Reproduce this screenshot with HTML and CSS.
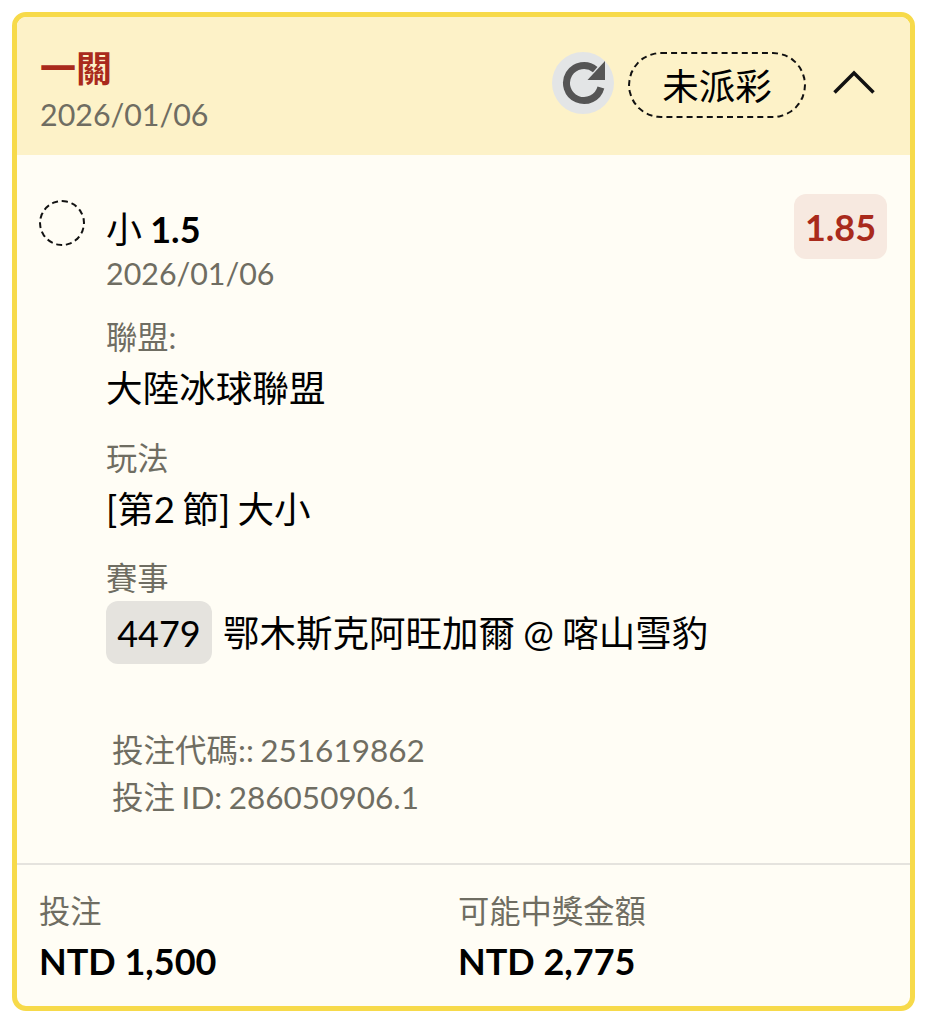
FILE: index.html
```html
<!DOCTYPE html>
<html lang="zh-Hant">
<head>
    <meta charset="UTF-8">
    <meta name="viewport" content="width=device-width, initial-scale=1.0">
    <title>一關</title>
    <link rel="stylesheet" href="styles.css">
</head>
<body>
    <div class="card">
        <div class="card-header">
            <div class="header-info">
                <div class="bet-type">一關</div>
                <div class="date">2026/01/06</div>
            </div>
            <div class="header-actions">
                <div class="refresh">
                    <svg width="46" height="46" viewBox="0 0 46 46">
                        <path class="refresh-arc" d="M40.900 27.500A17.500 17.500 0 1 1 35.200 9.600"/>
                        <path class="refresh-head" d="M45 1V20H27.500Z"/>
                    </svg>
                </div>
                <div class="status">未派彩</div>
                <svg class="chevron" width="42" height="24" viewBox="0 0 42 24">
                    <path d="M1.500 22.500L21 3 40.500 22.500"/>
                </svg>
            </div>
        </div>

        <div class="card-body">
            <div class="leg">
                <div class="leg-dot"></div>
                <div class="leg-main">
                    <div class="leg-top">
                        <div>
                            <div class="pick">小 <strong>1.5</strong></div>
                            <div class="date">2026/01/06</div>
                        </div>
                        <div class="odds">1.85</div>
                    </div>
                    <div class="field">
                        <div class="field-label">聯盟:</div>
                        <div class="field-value">大陸冰球聯盟</div>
                    </div>
                    <div class="field">
                        <div class="field-label">玩法</div>
                        <div class="field-value">[第2 節] 大小</div>
                    </div>
                    <div class="field">
                        <div class="field-label">賽事</div>
                        <div class="match">
                            <span class="match-id">4479</span>
                            <span class="field-value match-name">鄂木斯克阿旺加爾 @ 喀山雪豹</span>
                        </div>
                    </div>
                </div>
            </div>
            <div class="codes">
                <div>投注代碼:: 251619862</div>
                <div>投注 ID: 286050906.1</div>
            </div>
        </div>

        <div class="card-footer">
            <div class="amount">
                <div class="field-label">投注</div>
                <div class="amount-value">NTD 1,500</div>
            </div>
            <div class="amount">
                <div class="field-label">可能中獎金額</div>
                <div class="amount-value">NTD 2,775</div>
            </div>
        </div>
    </div>
</body>
</html>
```
FILE: styles.css
```css
body {
    margin: 0;
    padding: 12px 10px 16px 12px;
    font-family: Lato, "Noto Sans CJK TC", sans-serif;
    background: #fff;
    color: #000;
}

.card {
    height: 999px;
    box-sizing: border-box;
    border: 5px solid #f7da4a;
    border-radius: 14px;
    background: #fffdf5;
    overflow: hidden;
    display: flex;
    flex-direction: column;
}

.card-header {
    height: 138px;
    flex: none;
    box-sizing: border-box;
    padding: 29px 35px 0 23px;
    background: #fdf2c8;
    display: flex;
    justify-content: space-between;
}

.bet-type {
    color: #a92a1c;
    font-size: 36px;
    font-weight: 700;
    line-height: 44px;
}

.date {
    color: #6f6d62;
    font-size: 30.400px;
    line-height: 40px;
}

.card-header .date {
    margin-top: 4px;
}

.header-actions {
    display: flex;
    align-items: center;
    height: 76px;
}

.refresh {
    width: 62px;
    height: 62px;
    margin-top: -2px;
    border-radius: 50%;
    background: #e3e5e6;
    display: flex;
    align-items: center;
    justify-content: center;
}

.refresh-arc {
    fill: none;
    stroke: #555;
    stroke-width: 7;
}

.refresh-head {
    fill: #555;
}

.status {
    width: 178px;
    height: 66px;
    box-sizing: border-box;
    margin: 2px 0 0 14px;
    padding-bottom: 2px;
    border: 2px dashed #111;
    border-radius: 33px;
    font-size: 36.500px;
    display: flex;
    align-items: center;
    justify-content: center;
}

.chevron {
    margin: -4px 0 0 27px;
    fill: none;
    stroke: #111;
    stroke-width: 3.500;
}

.card-body {
    flex: 1;
    padding: 38px 23px 0 22px;
}

.leg {
    display: flex;
}

.leg-dot {
    width: 46px;
    height: 46px;
    flex: none;
    box-sizing: border-box;
    margin: 7px 21px 0 0;
    border: 2px dashed #111;
    border-radius: 50%;
}

.leg-main {
    flex: 1;
}

.leg-top {
    padding-bottom: 4.500px;
    display: flex;
    justify-content: space-between;
    align-items: flex-start;
}

.pick {
    margin-top: 13px;
    font-size: 36px;
    line-height: 47px;
    word-spacing: -1px;
}

.odds {
    width: 93px;
    height: 65px;
    margin-top: 1px;
    border-radius: 12px;
    background: #f7e9e0;
    color: #a92a1c;
    font-size: 36px;
    font-weight: 700;
    display: flex;
    align-items: center;
    justify-content: center;
}

.field {
    margin-top: 18.500px;
}

.field-label {
    color: #6f6d62;
    font-size: 31.300px;
    line-height: 42px;
}

.field-value {
    font-size: 36.600px;
    line-height: 60px;
    word-spacing: -2px;
}

.match {
    margin-top: 2px;
    display: flex;
    align-items: center;
    gap: 11px;
}

.match-name {
    font-size: 36.500px;
    word-spacing: -1px;
}

.match-id {
    width: 106px;
    height: 63px;
    border-radius: 12px;
    background: #e5e3de;
    font-size: 36px;
    display: flex;
    align-items: center;
    justify-content: center;
}

.codes {
    margin: 63px 0 0 73px;
    color: #6f6d62;
    font-size: 31.500px;
    line-height: 47px;
    word-spacing: -1.500px;
}

.card-footer {
    height: 143px;
    flex: none;
    box-sizing: border-box;
    padding: 25px 23px 0 22px;
    border-top: 2px solid #e5e3de;
    display: flex;
}

.amount {
    width: 419px;
}

.amount-value {
    margin-top: 7px;
    font-size: 36px;
    font-weight: 700;
    line-height: 44px;
}
```
